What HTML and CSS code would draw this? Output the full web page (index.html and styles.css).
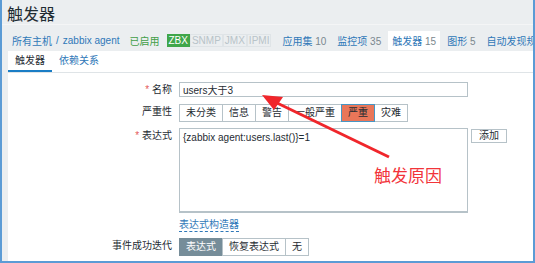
FILE: index.html
```html
<!DOCTYPE html>
<html lang="zh">
  <head>
    <meta charset="UTF-8" />
    <title>触发器</title>
    <link rel="stylesheet" href="styles.css">
  </head>
  <body>
    <div class="frame">
      <div class="header">
        <h1>触发器</h1>
      </div>

      <div class="nav">
        <a class="link">所有主机</a>
        <span class="sep">/</span>
        <a class="link">zabbix agent</a>
        <span class="status">已启用</span>
        <span class="badges">
          <span class="badge on">ZBX</span>
          <span class="badge">SNMP</span>
          <span class="badge">JMX</span>
          <span class="badge">IPMI</span>
        </span>
        <span class="item"><a class="link">应用集</a> 10</span>
        <span class="item"><a class="link">监控项</a> 35</span>
        <span class="item active"><a class="link">触发器</a> 15</span>
        <span class="item"><a class="link">图形</a> 5</span>
        <span class="item"><a class="link">自动发现规则</a></span>
      </div>

      <div class="panel">
        <div class="tabs">
          <span class="tab current">触发器</span>
          <span class="tab">依赖关系</span>
        </div>

        <div class="form">
          <label class="req">名称</label>
          <div><input class="text" type="text" value="users大于3" /></div>

          <label>严重性</label>
          <div class="group">
            <span class="btn">未分类</span>
            <span class="btn">信息</span>
            <span class="btn">警告</span>
            <span class="btn">一般严重</span>
            <span class="btn high">严重</span>
            <span class="btn">灾难</span>
          </div>

          <label class="req">表达式</label>
          <div class="expr">
            <div class="area">{zabbix agent:users.last()}=1</div>
            <span class="add">添加</span>
          </div>

          <label></label>
          <div><a class="link builder">表达式构造器</a></div>

          <label>事件成功迭代</label>
          <div class="group">
            <span class="btn sel">表达式</span>
            <span class="btn">恢复表达式</span>
            <span class="btn">无</span>
          </div>

          <label></label>
          <div class="group">
            <span class="btn sel">单个</span>
            <span class="btn">多重</span>
          </div>
        </div>
      </div>

      <svg class="arrow" width="535" height="263" viewBox="0 0 535 263">
        <line x1="389" y1="157" x2="275" y2="102" stroke="#f0262b" stroke-width="3" />
        <polygon points="262,95 283,97 274,110" fill="#f0262b" />
      </svg>
      <div class="note">触发原因</div>
    </div>
  </body>
</html>
```

FILE: styles.css
```css
* {
  margin: 0;
  padding: 0;
  box-sizing: border-box;
}

:root {
  --blue: #2f78b8;
  --frame: #5b9bd5;
  --bg: #ebeef0;
  --line: #dfe4e7;
  --btn-border: #b6c2c8;
  --text: #1f2c33;
}

body {
  font-family: "Liberation Sans", "Noto Sans CJK SC", sans-serif;
  font-size: 10px;
  color: var(--text);
  background: white;
}

.frame {
  position: relative;
  width: 535px;
  height: 263px;
  overflow: hidden;
  background: var(--bg);
  border-left: 2px solid var(--frame);
  border-right: 2px solid var(--frame);
  border-bottom: 2px solid var(--frame);
}

.header {
  height: 25px;
  padding: 5px 0 0 5px;
  border-bottom: 1px solid #f4f5f6;
}

.header h1 {
  font-size: 16px;
  line-height: 19px;
  font-weight: normal;
  color: #1f2c33;
}

.nav {
  height: 26px;
  display: flex;
  align-items: center;
  padding: 4px 0 0 10px;
  white-space: nowrap;
}

.link {
  color: var(--blue);
  text-decoration: none;
}

.sep {
  margin: 0 4px;
  color: var(--blue);
}

.status {
  color: #429e47;
  margin-left: 10px;
}

.badges {
  display: flex;
  margin-left: 7px;
}

.badge {
  padding: 0 1px;
  border: 1px solid var(--line);
  color: #b8c3c8;
  font-size: 10px;
  line-height: 11px;
}

.badge.on {
  background: #3fa64a;
  border-color: #3fa64a;
  color: white;
}

.item {
  color: #7a878e;
  margin-left: 3px;
  padding: 2px 4px;
}

.badges + .item {
  margin-left: 7px;
}

.item.active {
  background: white;
}

.panel {
  background: white;
  margin-left: 6px;
  height: 210px;
}

.tabs {
  height: 22px;
  display: flex;
  align-items: flex-end;
  border-bottom: 1px solid var(--line);
}

.tab {
  color: var(--blue);
  padding: 0 7px;
  height: 20px;
  line-height: 17px;
}

.tab.current {
  color: var(--text);
  border-bottom: 2px solid #1a7dc5;
}

.form {
  display: grid;
  grid-template-columns: 164px 1fr;
  column-gap: 7px;
  row-gap: 6px;
  padding-top: 9px;
}

.form label {
  text-align: right;
  font-size: 10px;
  line-height: 16px;
  color: var(--text);
}

.form label.req::before {
  content: "* ";
  color: #e45959;
}

.text {
  display: block;
  width: 289px;
  height: 15px;
  border: 1px solid var(--btn-border);
  padding: 0 3px;
  font-family: "Liberation Sans", "Noto Sans CJK SC", sans-serif;
  font-size: 10px;
  color: var(--text);
}

.group {
  display: flex;
}

.btn {
  height: 18px;
  line-height: 16px;
  padding: 0 6px;
  border: 1px solid var(--btn-border);
  margin-left: -1px;
  background: white;
  font-size: 10px;
  color: var(--text);
}

.btn:first-child {
  margin-left: 0;
}

.btn.high {
  background: #e97659;
  border-color: #4796c4;
  position: relative;
  z-index: 1;
}

.btn.sel {
  background: #768d99;
  border-color: #768d99;
  color: white;
}

.expr {
  display: flex;
  gap: 3px;
  align-items: flex-start;
}

.area {
  width: 289px;
  height: 85px;
  border: 1px solid var(--btn-border);
  border-bottom-width: 2px;
  padding: 3px 3px;
  font-size: 10px;
}

.add {
  height: 14px;
  line-height: 12px;
  padding: 0 7px;
  border: 1px solid var(--btn-border);
  font-size: 10px;
  margin-top: 1px;
}

.builder {
  font-size: 10px;
  line-height: 12px;
  border-bottom: 1px dashed var(--blue);
  display: inline-block;
}

.arrow {
  position: absolute;
  left: -2px;
  top: 0;
}

.note {
  position: absolute;
  left: 372px;
  top: 162px;
  color: #f2343a;
  font-size: 17px;
  font-family: "Noto Sans CJK SC", sans-serif;
}
```
